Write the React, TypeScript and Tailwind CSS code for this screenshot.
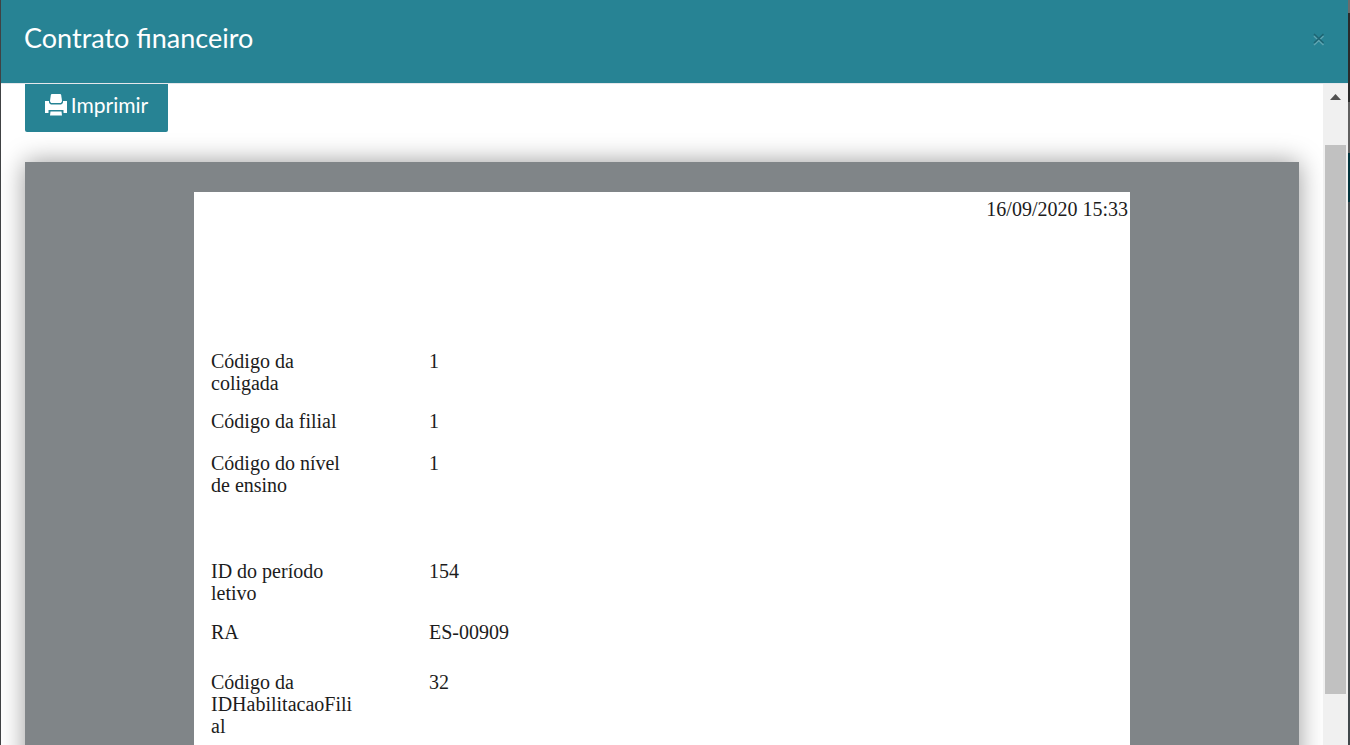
import { useState } from 'react';

interface ContractField {
  label: string;
  value: string;
  rowClass: string;
}

const fields: ContractField[] = [
  { label: 'Código da coligada', value: '1', rowClass: 'h-[60px]' },
  { label: 'Código da filial', value: '1', rowClass: 'h-[42px]' },
  { label: 'Código do nível de ensino', value: '1', rowClass: 'h-[108px]' },
  { label: 'ID do período letivo', value: '154', rowClass: 'h-[61px]' },
  { label: 'RA', value: 'ES-00909', rowClass: 'h-[50px]' },
  { label: 'Código da IDHabilitacaoFilial', value: '32', rowClass: 'h-[84px]' },
];

function PrinterIcon() {
  return (
    <svg viewBox="0 0 22 22" className="size-[22px]" fill="currentColor" aria-hidden="true">
      <path d="M7 0h8q1 0 1.200 1L17 7q0 1.200-1.200 2H6.200Q5 8.200 5 7l.8-6Q6 0 7 0z" />
      <path d="M0 7h4v1.500Q4.500 10 6 10.500h10q1.500-.5 2-2V7h4v12h-3.500v-3h-15v3H0z" />
      <path d="M5.500 17.500h11l.5 4H5z" />
    </svg>
  );
}

function ModalHeader({ onClose }: { onClose: () => void }) {
  return (
    <header className="flex h-[84px] shrink-0 items-center justify-between border-b border-gray-200 bg-[#278394] px-[23px] pb-[6px]">
      <h1 id="modal-title" className="font-['Lato',sans-serif] text-[27px] text-white">
        Contrato financeiro
      </h1>
      <button type="button" aria-label="Fechar" onClick={onClose} className="flex text-[#1e6573]">
        <svg viewBox="0 0 12 14" className="h-[14px] w-[12px]" fill="none" strokeWidth="1.600" aria-hidden="true">
          <path d="M1 4l9.500 9M10.500 4L1 13" stroke="#5fa4b1" />
          <path d="M1 2l9.500 9M10.500 2L1 11" stroke="currentColor" />
        </svg>
      </button>
    </header>
  );
}

function ContractPage() {
  return (
    <article className="w-[936px] bg-white pb-10 font-['Liberation_Serif',serif] text-[20px] leading-[22px] text-[#1c1c1c]">
      <p className="pt-[6px] pr-[2px] text-right">16/09/2020 15:33</p>
      <table className="mt-[130px] ml-[17px] table-fixed text-left">
        <tbody>
          {fields.map((field) => (
            <tr key={field.label} className={field.rowClass}>
              <th scope="row" className="w-[218px] pr-[74px] align-top font-normal wrap-anywhere">
                {field.label}
              </th>
              <td className="w-[240px] align-top">{field.value}</td>
            </tr>
          ))}
        </tbody>
      </table>
    </article>
  );
}

function ScrollTrack() {
  return (
    <div className="flex w-[25px] shrink-0 flex-col items-center bg-[#f0f0f0]" aria-hidden="true">
      <div className="flex h-[61px] w-full shrink-0 justify-center pt-[10px]">
        <svg viewBox="0 0 11 6" className="h-[6px] w-[11px]" fill="#505050">
          <path d="M5.500 0L11 6H0z" />
        </svg>
      </div>
      <div className="w-[21px] grow bg-[#c1c1c1]" />
      <div className="h-[51px] shrink-0" />
    </div>
  );
}

export default function App() {
  const [open, setOpen] = useState(true);

  return (
    <div className="flex h-screen overflow-hidden bg-[#404244] pl-px">
      {open && (
        <section role="dialog" aria-labelledby="modal-title" className="flex min-w-0 grow flex-col bg-white">
          <ModalHeader onClose={() => setOpen(false)} />
          <div className="flex min-h-0 grow">
            <main className="min-w-0 grow overflow-hidden px-6">
              <button
                type="button"
                onClick={() => window.print()}
                className="flex h-12 w-[143px] items-center justify-center gap-1 rounded-b-xs bg-[#278394] pb-[6px] font-['Lato',sans-serif] text-[21px] text-white"
              >
                <PrinterIcon />
                Imprimir
              </button>
              <div className="mt-[30px] flex justify-center bg-[#808588] py-[30px] shadow-[0_0_24px_rgba(0,0,0,0.4)]">
                <ContractPage />
              </div>
            </main>
            <ScrollTrack />
          </div>
        </section>
      )}
      {/* sliver of the page behind the modal */}
      <div className="ml-auto flex w-[2px] shrink-0 flex-col bg-[#41484b]">
        <div className="h-[13px] bg-[#6b6b6b]" />
        <div className="h-[89px] bg-[#2a2a2a]" />
        <div className="h-[51px] bg-[#606060]" />
        <div className="h-[49px] bg-[#02343d]" />
      </div>
    </div>
  );
}
